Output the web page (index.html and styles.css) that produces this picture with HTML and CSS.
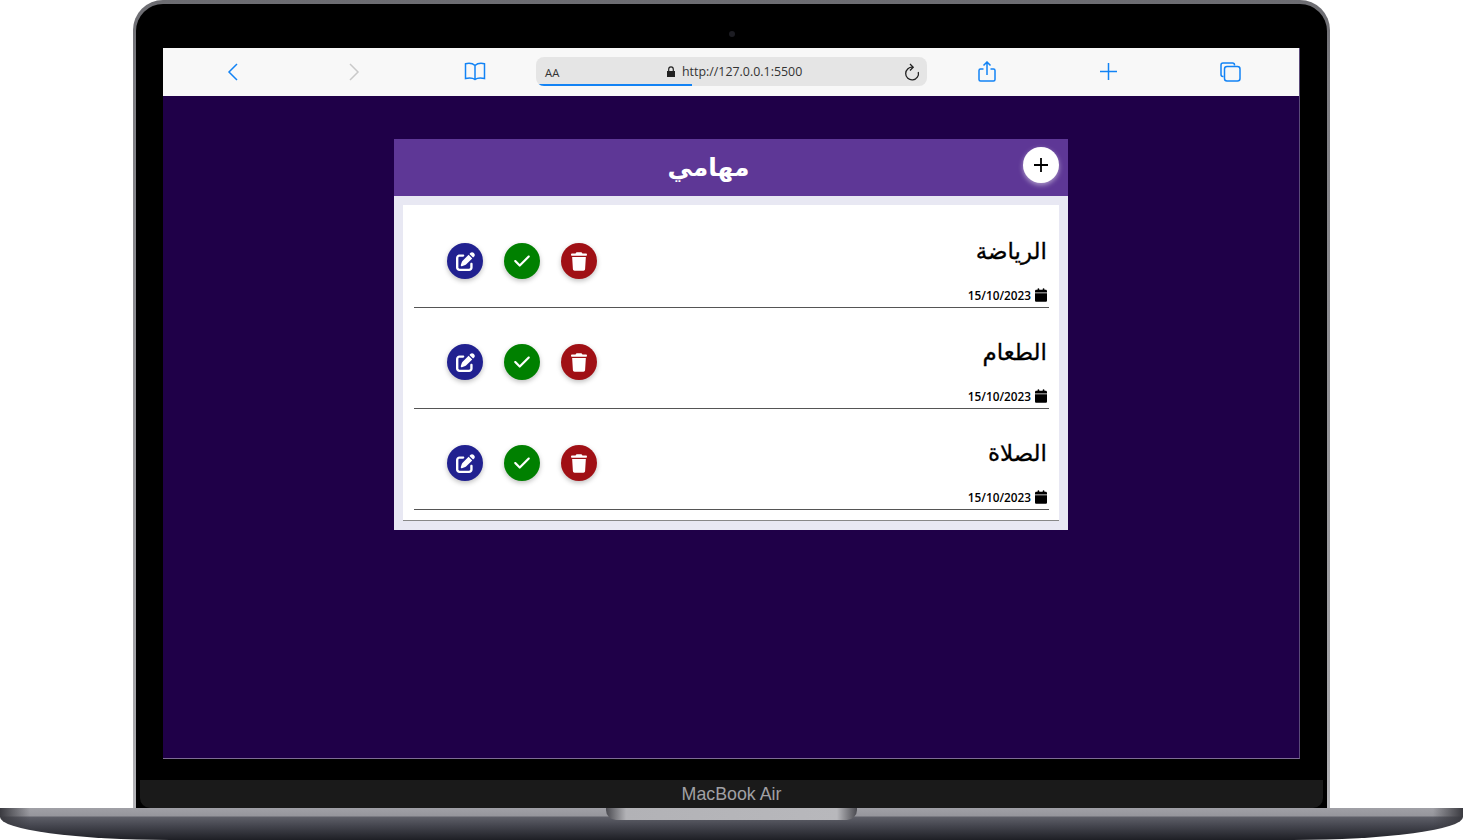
FILE: index.html
```html
<!DOCTYPE html>
<html lang="ar">

<head>
    <meta charset="UTF-8">
    <meta name="viewport" content="width=device-width, initial-scale=1.0">
    <title>مهامي</title>
    <link rel="stylesheet" href="styles.css">
</head>

<body>
    <svg class="icon-defs" aria-hidden="true">
        <symbol id="i-edit" viewBox="0 0 512 512">
            <path d="M471.6 21.7c-21.9-21.9-57.3-21.9-79.2 0L362.3 51.7l97.9 97.9 30.1-30.1c21.9-21.9 21.9-57.3 0-79.2L471.6 21.7zm-299.2 220c-6.1 6.1-10.8 13.6-13.5 21.9l-29.6 88.8c-2.9 8.6-.6 18.1 5.8 24.6s15.9 8.7 24.6 5.8l88.8-29.6c8.2-2.7 15.7-7.4 21.9-13.5L437.7 172.3 339.7 74.3 172.4 241.7zM96 64C43 64 0 107 0 160V416c0 53 43 96 96 96H352c53 0 96-43 96-96V320c0-17.7-14.3-32-32-32s-32 14.3-32 32v96c0 17.7-14.3 32-32 32H96c-17.7 0-32-14.3-32-32V160c0-17.7 14.3-32 32-32h96c17.7 0 32-14.3 32-32s-14.3-32-32-32H96z" />
        </symbol>
        <symbol id="i-check" viewBox="0 0 448 512">
            <path d="M438.6 105.4c12.5 12.5 12.5 32.8 0 45.3l-256 256c-12.5 12.5-32.8 12.5-45.3 0l-128-128c-12.5-12.5-12.5-32.8 0-45.3s32.8-12.5 45.3 0L160 338.7 393.4 105.4c12.5-12.5 32.8-12.5 45.3 0z" />
        </symbol>
        <symbol id="i-trash" viewBox="0 0 448 512">
            <path d="M135.2 17.7L128 32H32C14.3 32 0 46.3 0 64S14.3 96 32 96H416c17.7 0 32-14.3 32-32s-14.3-32-32-32H320l-7.2-14.3C307.4 6.8 296.3 0 284.2 0H163.8c-12.1 0-23.2 6.8-28.6 17.7zM416 128H32L53.2 467c1.6 25.3 22.6 45 47.9 45H346.9c25.3 0 46.3-19.7 47.9-45L416 128z" />
        </symbol>
        <symbol id="i-calendar" viewBox="0 0 448 512">
            <path d="M96 32V64H48C21.5 64 0 85.5 0 112v48H448V112c0-26.5-21.5-48-48-48H352V32c0-17.7-14.3-32-32-32s-32 14.3-32 32V64H160V32c0-17.7-14.3-32-32-32S96 14.3 96 32zM448 192H0V464c0 26.5 21.5 48 48 48H400c26.5 0 48-21.5 48-48V192z" />
        </symbol>
    </svg>

    <div class="laptop">
        <div class="bezel">
            <div class="camera"></div>
            <div class="screen">
                <div class="browser-bar">
                    <div class="bar-icon left">
                        <svg width="12" height="18" viewBox="0 0 12 18"><path d="M10 1 2 9l8 8" /></svg>
                    </div>
                    <div class="bar-icon left disabled">
                        <svg width="12" height="18" viewBox="0 0 12 18"><path d="M2 1l8 8-8 8" /></svg>
                    </div>
                    <div class="bar-icon left">
                        <svg width="22" height="19" viewBox="0 0 22 19"><path d="M11 3.500C9 1.700 5 1 1.500 1.800V16.500C5 15.800 9 16 11 17.500 13 16 17 15.800 20.500 16.500V1.800C17 1 13 1.700 11 3.500ZM11 3.500V17.500" /></svg>
                    </div>
                    <div class="address">
                        <span class="aa">AA</span>
                        <span class="url">
                            <svg width="8" height="11" viewBox="0 0 8 11"><path class="lock-body" d="M0 5h8v6H0z" /><path class="lock-loop" d="M1.700 5V3.200a2.300 2.300 0 0 1 4.600 0V5" /></svg>
                            http://127.0.0.1:5500
                        </span>
                        <svg class="reload" width="16" height="18" viewBox="0 0 16 18"><path d="M9 4.200A6.400 6.400 0 1 0 14.300 9" /><path d="M6 1l3.200 3.200L6 7.500" /></svg>
                        <div class="progress"></div>
                    </div>
                    <div class="bar-icon share">
                        <svg width="18" height="21" viewBox="0 0 18 21"><path d="M5.500 8H2.500a1.500 1.500 0 0 0-1.500 1.500v9A1.500 1.500 0 0 0 2.500 20h13a1.500 1.500 0 0 0 1.500-1.500v-9A1.500 1.500 0 0 0 15.500 8h-3M9 14V1M5.500 4.500 9 1l3.500 3.500" /></svg>
                    </div>
                    <div class="bar-icon">
                        <svg width="17" height="17" viewBox="0 0 17 17"><path d="M8.500 0v17M0 8.500h17" /></svg>
                    </div>
                    <div class="bar-icon tabs">
                        <svg width="21" height="20" viewBox="0 0 21 20"><path d="M3.500 14.500H3a2 2 0 0 1-2-2V3a2 2 0 0 1 2-2h9.500a2 2 0 0 1 2 2v.500" /><rect x="4.500" y="4.500" width="15.500" height="14.500" rx="2.500" /></svg>
                    </div>
                </div>

                <div class="page">
                    <div class="card">
                        <div class="card-head">
                            <h1>مهامي</h1>
                            <button class="btn btn-add">
                                <svg width="16" height="16" viewBox="0 0 16 16"><path d="M8 1v14M1 8h14" /></svg>
                            </button>
                        </div>
                        <div class="card-body">
                            <ul class="tasks">
                                <li class="task">
                                    <div class="actions">
                                        <button class="btn btn-edit"><svg class="fa" width="19" height="19"><use href="#i-edit" /></svg></button>
                                        <button class="btn btn-done"><svg class="fa" width="16" height="18"><use href="#i-check" /></svg></button>
                                        <button class="btn btn-del"><svg class="fa" width="16" height="19"><use href="#i-trash" /></svg></button>
                                    </div>
                                    <div class="task-text">
                                        <h2>الرياضة</h2>
                                        <div class="date">15/10/2023 <svg class="fa" width="12" height="14"><use href="#i-calendar" /></svg></div>
                                    </div>
                                </li>
                                <li class="task">
                                    <div class="actions">
                                        <button class="btn btn-edit"><svg class="fa" width="19" height="19"><use href="#i-edit" /></svg></button>
                                        <button class="btn btn-done"><svg class="fa" width="16" height="18"><use href="#i-check" /></svg></button>
                                        <button class="btn btn-del"><svg class="fa" width="16" height="19"><use href="#i-trash" /></svg></button>
                                    </div>
                                    <div class="task-text">
                                        <h2>الطعام</h2>
                                        <div class="date">15/10/2023 <svg class="fa" width="12" height="14"><use href="#i-calendar" /></svg></div>
                                    </div>
                                </li>
                                <li class="task">
                                    <div class="actions">
                                        <button class="btn btn-edit"><svg class="fa" width="19" height="19"><use href="#i-edit" /></svg></button>
                                        <button class="btn btn-done"><svg class="fa" width="16" height="18"><use href="#i-check" /></svg></button>
                                        <button class="btn btn-del"><svg class="fa" width="16" height="19"><use href="#i-trash" /></svg></button>
                                    </div>
                                    <div class="task-text">
                                        <h2>الصلاة</h2>
                                        <div class="date">15/10/2023 <svg class="fa" width="12" height="14"><use href="#i-calendar" /></svg></div>
                                    </div>
                                </li>
                            </ul>
                        </div>
                    </div>
                </div>
            </div>
            <div class="chin"></div>
            <div class="hinge-strip">MacBook Air</div>
        </div>
    </div>
    <div class="base">
        <div class="notch"></div>
    </div>
</body>

</html>
```

FILE: styles.css
```css
* {
    box-sizing: border-box;
}

html,
body {
    margin: 0;
    height: 100%;
    overflow: hidden;
    background-color: #fff;
}

body {
    font-family: "Open Sans", "Noto Sans", sans-serif;
}

.icon-defs {
    display: none;
}

.laptop {
    width: 1197px;
    height: 808px;
    margin: 0 auto;
    padding: 4px 3px 0;
    border-radius: 30px 30px 0 0;
    background: linear-gradient(#6c6c71, #7c7c81 10%, #a6a6aa 90%, #b4b4b8);
}

.bezel {
    position: relative;
    height: 804px;
    padding: 44px 27px 0;
    border-radius: 27px 27px 0 0;
    background-color: #000;
}

.camera {
    position: absolute;
    top: 27px;
    left: 593px;
    width: 6px;
    height: 6px;
    border-radius: 50%;
    background-color: #1c1c22;
}

.screen {
    height: 711px;
    border-right: 1px solid #5a4a78;
    border-bottom: 1px solid #7d6c94;
    background-color: #1f0048;
}

.browser-bar {
    display: grid;
    grid-template-columns: repeat(3, 121px) 391px repeat(3, 121px);
    align-items: center;
    height: 48px;
    padding: 0 0 1px 10px;
    background-color: #f8f8f8;
}

.bar-icon {
    display: flex;
    align-items: center;
    justify-content: center;
}

.bar-icon.left,
.bar-icon.share {
    padding-right: 2px;
}

.bar-icon.tabs {
    padding-left: 2px;
}

.bar-icon svg {
    fill: none;
    stroke: #1283f5;
    stroke-width: 1.5;
}

.bar-icon.disabled svg {
    stroke: #c9c9c9;
}

.address {
    position: relative;
    display: flex;
    align-items: center;
    height: 29px;
    padding: 0 7px 0 9px;
    overflow: hidden;
    border-radius: 8px;
    color: #333;
    background-color: #e5e5e5;
}

.aa {
    width: 122px;
    margin-top: 2px;
    font-size: 11.3px;
}

.url {
    display: flex;
    flex: 1;
    align-items: center;
    gap: 7px;
    margin-top: -1px;
    font-size: 12.4px;
}

.lock-body {
    fill: #222;
}

.lock-loop {
    fill: none;
    stroke: #222;
    stroke-width: 1.2;
}

.reload {
    fill: none;
    stroke: #222;
    stroke-width: 1.3;
}

.progress {
    position: absolute;
    bottom: 0;
    left: 1px;
    width: 155px;
    height: 2px;
    background-color: #1283f5;
}

.page {
    padding: 43px 0 0 231px;
}

.card {
    width: 674px;
    background-color: #e8e8f3;
}

.card-head {
    display: flex;
    align-items: flex-start;
    height: 57px;
    padding: 8px 9px 0 0;
    background-color: #5e3796;
}

.card-head h1 {
    flex: 1;
    margin: 6px 0 0;
    font-family: "DejaVu Sans", sans-serif;
    font-size: 25px;
    font-weight: 700;
    text-align: center;
    color: #fff;
}

.btn {
    display: flex;
    align-items: center;
    justify-content: center;
    width: 36px;
    height: 36px;
    padding: 0;
    border: 0;
    border-radius: 50%;
    box-shadow: 0 2px 5px rgba(0, 0, 0, 0.25);
}

.btn .fa {
    fill: #fff;
}

.btn-add {
    background-color: #fff;
    box-shadow: 0 2px 5px rgba(255, 255, 255, 0.5);
}

.btn-add svg {
    fill: none;
    stroke: #000;
    stroke-width: 1.8;
}

.btn-edit {
    background-color: #212190;
}

.btn-done {
    background-color: #008000;
}

.btn-del {
    background-color: #a01015;
}

.card-body {
    padding: 9px;
}

.tasks {
    margin: 0;
    padding: 2px 10px 10px 11px;
    list-style: none;
    border-bottom: 1px solid #888;
    background-color: #fff;
}

.task {
    display: flex;
    justify-content: space-between;
    height: 101px;
    border-bottom: 1px solid #555;
}

.actions {
    display: flex;
    gap: 21px;
    padding: 36px 0 0 33px;
}

.task-text {
    display: flex;
    flex-direction: column;
    align-items: flex-end;
    justify-content: space-between;
    padding: 32px 2px 4px 0;
}

.task-text h2 {
    margin: 0;
    font-family: "DejaVu Sans", sans-serif;
    font-size: 23px;
    line-height: 24px;
    font-weight: 400;
    -webkit-text-stroke: 0.3px #000;
    color: #000;
}

.date {
    display: flex;
    align-items: center;
    gap: 4px;
    font-size: 11.8px;
    line-height: 16px;
    font-weight: 600;
    color: #000;
}

.date .fa {
    fill: #000;
}

.chin {
    height: 21px;
}

.hinge-strip {
    height: 28px;
    margin: 0 -23px;
    padding-top: 4px;
    border-radius: 0 0 10px 10px;
    font-family: "Liberation Sans", sans-serif;
    font-size: 17.8px;
    line-height: 20px;
    text-align: center;
    color: #a0a0a4;
    background-color: #1a1a1a;
}

.base {
    height: 32px;
    border-radius: 0 0 170px 170px / 0 0 23px 23px;
    background:
        linear-gradient(90deg, #3a3a40, rgba(160, 160, 166, 0) 30px, rgba(160, 160, 166, 0) calc(100% - 30px), #3a3a40),
        linear-gradient(#a0a0a6 0, #96969c 8px, #5e5f68 9px, #44454e 18px, #1e1f25 100%);
}

.notch {
    width: 251px;
    height: 12px;
    margin: 0 auto;
    border-radius: 0 0 10px 10px;
    background: linear-gradient(90deg, #4a4a50, #b2b2b6 8%, #b8b8bc 92%, #4a4a50);
}
```
